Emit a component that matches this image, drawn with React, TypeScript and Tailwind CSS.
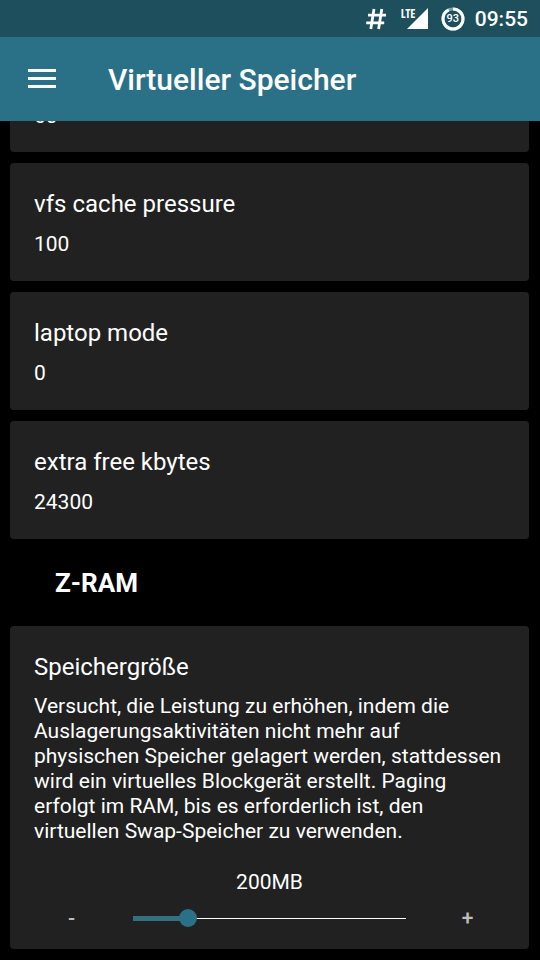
import { useState } from "react";

const settings = [
  { title: "vfs cache pressure", value: "100" },
  { title: "laptop mode", value: "0" },
  { title: "extra free kbytes", value: "24300" },
];

const MAX_SIZE = 1000;

const StatusBar = () => (
  <div className="flex h-[37px] items-center justify-end bg-[#1e4f5c] pr-3">
    <svg width="22" height="22" viewBox="0 0 22 22" className="mr-3.5">
      <path
        d="M9 1 5.8 21M16.8 1 13.6 21M3 7.2H21M1.2 14.8H19.2"
        fill="none"
        stroke="white"
        strokeWidth="2.8"
      />
    </svg>
    <div className="relative mr-3 h-[22px] w-7">
      <svg width="28" height="22" viewBox="0 0 28 22">
        <path d="M27 0V21H6Z" fill="white" />
      </svg>
      <span className="absolute top-0 left-0 font-['Open_Sans_Condensed','Roboto_Condensed',Roboto,sans-serif] text-[12px] leading-3 font-bold text-white">
        LTE
      </span>
    </div>
    <div className="relative mr-2.5 flex size-6 items-center justify-center">
      <svg
        width="24"
        height="24"
        viewBox="0 0 24 24"
        className="absolute inset-0"
      >
        <circle
          cx="12"
          cy="12"
          r="10"
          fill="none"
          stroke="#7ba0aa"
          strokeWidth="3"
        />
        <circle
          cx="12"
          cy="12"
          r="10"
          fill="none"
          stroke="white"
          strokeWidth="3"
          pathLength="100"
          strokeDasharray="93 7"
          transform="rotate(-90 12 12)"
        />
      </svg>
      <span className="text-[11px] leading-3 font-medium">93</span>
    </div>
    <span className="text-[21px] leading-6 font-medium">09:55</span>
  </div>
);

const SettingCard = ({ title, value }: { title: string; value: string }) => (
  <div className="rounded-[4px] bg-[#212121] px-6 pt-[25px] pb-6">
    <h3 className="text-[24px] leading-8">{title}</h3>
    <p className="mt-[11px] text-[21px] leading-[26px]">{value}</p>
  </div>
);

const App = () => {
  const [size, setSize] = useState(200);

  return (
    <div className="min-h-screen bg-black font-[Roboto,sans-serif] text-white">
      <StatusBar />
      <header className="flex h-[84px] items-center bg-[#2a7188] px-7">
        <button type="button" aria-label="Menu" className="mr-[52px]">
          <svg width="28" height="20" viewBox="0 0 28 20">
            <path d="M0 0H28V3H0ZM0 8H28V11H0ZM0 16H28V19H0Z" fill="white" />
          </svg>
        </button>
        <h1 className="pt-0.5 text-[30px] leading-9 font-medium">
          Virtueller Speicher
        </h1>
      </header>

      <main className="overflow-hidden pr-[11px] pb-[11px] pl-[10px]">
        <div className="flex flex-col gap-[11px]">
          {/* card scrolled under the app bar */}
          <div className="-mt-[18px] rounded-b-[4px] bg-[#212121] px-6 pb-[23px]">
            <p className="text-[21px] leading-[26px]">60</p>
          </div>
          {settings.map((setting) => (
            <SettingCard key={setting.title} {...setting} />
          ))}
        </div>

        <h2 className="px-[45px] pt-7 pb-[27px] text-[26px] leading-8 font-bold">
          Z-RAM
        </h2>

        <div className="rounded-[4px] bg-[#212121] px-6 pt-[25px] pb-[19px]">
          <h3 className="text-[24px] leading-8">Speichergröße</h3>
          <p className="mt-[11px] text-[21px] leading-[25px]">
            Versucht, die Leistung zu erhöhen, indem die Auslagerungsaktivitäten
            nicht mehr auf physischen Speicher gelagert werden, stattdessen wird
            ein virtuelles Blockgerät erstellt. Paging erfolgt im RAM, bis es
            erforderlich ist, den virtuellen Swap-Speicher zu verwenden.
          </p>
          <p className="mt-[25px] text-center text-[21px] leading-[26px]">
            {size}MB
          </p>
          <div className="mt-[11px] flex h-6 items-center">
            <button
              type="button"
              onClick={() => setSize(Math.max(0, size - 10))}
              className="w-[75px] text-[21px] leading-6 font-medium text-[#bdbdbd]"
            >
              -
            </button>
            <div className="flex-1 px-6">
              <div className="relative flex h-6 items-center">
                <div className="h-px w-full bg-white" />
                <div
                  className="absolute left-0 h-[5px] bg-[#34707f]"
                  style={{ width: `${(size / MAX_SIZE) * 100}%` }}
                />
                <input
                  type="range"
                  aria-label="Speichergröße"
                  min={0}
                  max={MAX_SIZE}
                  step={10}
                  value={size}
                  onChange={(e) => setSize(Number(e.target.value))}
                  className="absolute -inset-x-[9px] h-6 appearance-none bg-transparent [&::-webkit-slider-thumb]:size-[18px] [&::-webkit-slider-thumb]:appearance-none [&::-webkit-slider-thumb]:rounded-full [&::-webkit-slider-thumb]:bg-[#2a7188]"
                />
              </div>
            </div>
            <button
              type="button"
              onClick={() => setSize(Math.min(MAX_SIZE, size + 10))}
              className="w-[75px] text-[21px] leading-6 font-medium text-[#bdbdbd]"
            >
              +
            </button>
          </div>
        </div>
      </main>
    </div>
  );
};

export default App;
